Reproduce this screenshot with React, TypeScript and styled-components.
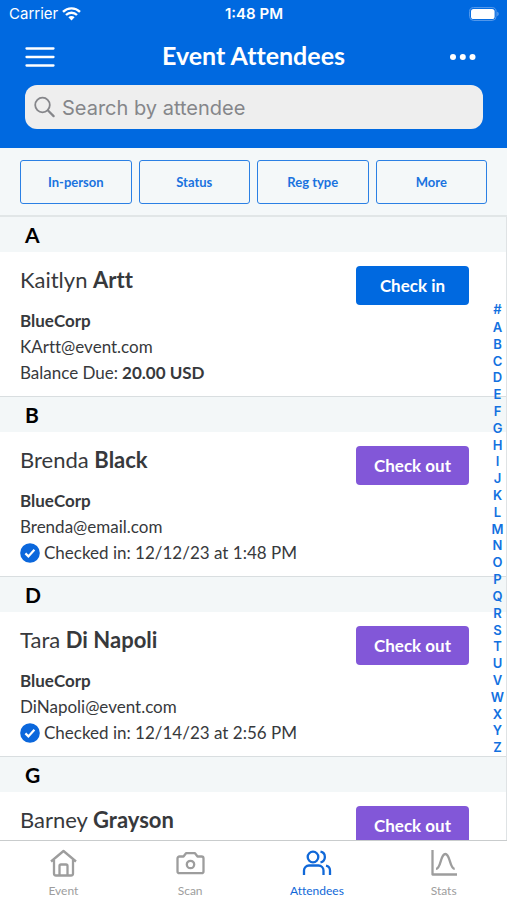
import React from "react";
import styled, { createGlobalStyle } from "styled-components";

const blue = "#0069e0";
const purple = "#8257d8";
const ink = "#37393c";
const lato = `Lato, "Liberation Sans", sans-serif`;
const system = `Inter, "Liberation Sans", sans-serif`;

const GlobalStyle = createGlobalStyle`
  *, *::before, *::after { box-sizing: border-box; }
  body {
    margin: 0;
    font-family: ${lato};
    font-variant-ligatures: none;
    color: ${ink};
    background: #fff;
  }
  button, input { font-family: inherit; font-variant-ligatures: inherit; margin: 0; }
  button { cursor: pointer; }
`;

const Screen = styled.div`
  display: flex;
  flex-direction: column;
  height: 100vh;
  overflow: hidden;
`;

const Header = styled.header`
  background: ${blue};
  color: #fff;
  padding-bottom: 19px;
`;

const StatusBar = styled.div`
  display: grid;
  grid-template-columns: 1fr auto 1fr;
  align-items: center;
  height: 28px;
  padding: 0 8px 0 9px;
  font: 400 15px/20px ${system};
`;

const Carrier = styled.span`
  display: flex;
  align-items: center;
  gap: 4px;
`;

const Clock = styled.time`
  font-weight: 600;
`;

const Battery = styled.svg`
  justify-self: end;
`;

const TitleBar = styled.div`
  display: grid;
  grid-template-columns: 1fr auto 1fr;
  align-items: center;
  height: 57px;
  padding: 0 25px;
`;

const Title = styled.h1`
  margin: 0;
  padding-bottom: 4px;
  font-size: 25px;
  line-height: 32px;
  font-weight: 700;
`;

const IconButton = styled.button<{ $end?: boolean }>`
  display: flex;
  justify-self: ${(p) => (p.$end ? "end" : "start")};
  padding: 0;
  border: 0;
  background: none;
  color: inherit;
`;

const SearchField = styled.label`
  display: flex;
  align-items: center;
  gap: 7px;
  height: 44px;
  margin: 0 24px 0 25px;
  padding: 0 9px;
  border-radius: 12px;
  background: #eeeeee;
  color: #85868a;
`;

const SearchInput = styled.input`
  flex: 1;
  min-width: 0;
  padding: 2px 0 0;
  border: 0;
  outline: 0;
  background: none;
  color: ${ink};
  font: 400 20px/28px ${system};
  &::placeholder { color: #85868a; opacity: 1; }
`;

const Filters = styled.div`
  display: grid;
  grid-template-columns: repeat(4, 1fr);
  gap: 7px;
  padding: 12px 20px 11px;
  border-bottom: 2px solid #e1e6e7;
  background: #f4f8f9;
`;

const FilterButton = styled.button`
  height: 44px;
  padding: 0;
  border: 1px solid #2b80e4;
  border-radius: 3px;
  background: transparent;
  color: #1a73df;
  font-size: 13px;
  font-weight: 700;
`;

const ListPane = styled.main`
  position: relative;
  flex: 1;
  min-height: 0;
  border-right: 1px solid #dfe3e5;
`;

const Scroller = styled.div`
  height: 100%;
  overflow-y: auto;
  scrollbar-width: none;
`;

const Group = styled.section`
  & + & { border-top: 1px solid #d9dee0; }
`;

const Letter = styled.h2`
  margin: 0;
  padding: 0 25px;
  background: #f3f7f8;
  color: #000;
  font-size: 21px;
  line-height: 35px;
  font-weight: 700;
`;

const Attendee = styled.article`
  display: flex;
  justify-content: space-between;
  align-items: flex-start;
  min-height: 144px;
  padding: 14px 37px 10px 20px;
`;

const Name = styled.h3`
  margin: 0 0 14px;
  font-size: 22px;
  line-height: 28px;
  font-weight: 400;
`;

const Line = styled.p`
  display: flex;
  align-items: center;
  gap: 4px;
  margin: 0;
  font-size: 17px;
  line-height: 26px;
  white-space: nowrap;
`;

const Action = styled.button<{ $out?: boolean }>`
  flex: none;
  width: 113px;
  height: 39px;
  padding: 0;
  border: 0;
  border-radius: 4px;
  background: ${(p) => (p.$out ? purple : blue)};
  color: #fff;
  font-size: 17px;
  font-weight: 700;
`;

const IndexRail = styled.nav`
  position: absolute;
  inset: 0 0 0 auto;
  width: 17px;
  padding-bottom: 3px;
  display: flex;
  flex-direction: column;
  justify-content: center;
`;

const IndexLetters = styled.div`
  display: flex;
  flex-direction: column;
  height: 437px;
`;

const IndexLink = styled.a`
  display: flex;
  flex: 1 1 0;
  align-items: center;
  justify-content: center;
  min-height: 0;
  color: #1271df;
  font: 600 13px/16px ${system};
  text-decoration: none;
`;

const IndexHash = styled(IndexLink)`
  flex: none;
  height: 20px;
`;

const TabBar = styled.nav`
  display: grid;
  grid-template-columns: repeat(4, 1fr);
  border-top: 1px solid #c9cccd;
  background: #fff;
`;

const Tab = styled.button<{ $active?: boolean }>`
  display: flex;
  flex-direction: column;
  align-items: center;
  gap: 5px;
  padding: 7px 0 1px;
  border: 0;
  background: none;
  color: ${(p) => (p.$active ? "#1068d8" : "#9d9d9d")};
  font-size: 12px;
  line-height: 16px;
`;

const TabIcon = styled.svg`
  width: 32px;
  height: 30px;
  fill: none;
  stroke: currentColor;
  stroke-width: 2.3;
  stroke-linejoin: round;
`;

const WifiIcon = () => (
  <svg width="19" height="14" viewBox="0 0 19 14" fill="none" stroke="#fff" strokeWidth="2.4" aria-hidden="true">
    <path d="M1 4.8a12.2 12.2 0 0 1 17 0M4 8a8 8 0 0 1 11 0" />
    <path d="M9.500 13.400 6.400 10.300a4.400 4.400 0 0 1 6.200 0Z" fill="#fff" stroke="none" />
  </svg>
);

const CheckIcon = () => (
  <svg width="20" height="20" viewBox="0 0 20 20" role="img" aria-label="Checked in">
    <circle cx="10" cy="10" r="9.800" fill="#0b67dc" />
    <path d="m5.400 10.400 3 3 6-6.600" fill="none" stroke="#fff" strokeWidth="2.200" />
  </svg>
);

type Person = {
  letter: string;
  first: string;
  last: string;
  email?: string;
  checkedIn?: string;
  balance?: string;
};

const people: Person[] = [
  { letter: "A", first: "Kaitlyn", last: "Artt", email: "KArtt@event.com", balance: "20.00 USD" },
  { letter: "B", first: "Brenda", last: "Black", email: "Brenda@email.com", checkedIn: "12/12/23 at 1:48 PM" },
  { letter: "D", first: "Tara", last: "Di Napoli", email: "DiNapoli@event.com", checkedIn: "12/14/23 at 2:56 PM" },
  { letter: "G", first: "Barney", last: "Grayson" },
];

const AttendeeRow = ({ person }: { person: Person }) => (
  <Group id={`group-${person.letter}`}>
    <Letter>{person.letter}</Letter>
    <Attendee>
      <div>
        <Name>
          {person.first} <b>{person.last}</b>
        </Name>
        {person.email && (
          <>
            <Line>
              <b>BlueCorp</b>
            </Line>
            <Line>{person.email}</Line>
          </>
        )}
        {person.balance && (
          <Line>
            Balance Due: <b>{person.balance}</b>
          </Line>
        )}
        {person.checkedIn && (
          <Line>
            <CheckIcon />
            Checked in: {person.checkedIn}
          </Line>
        )}
      </div>
      <Action type="button" $out={!person.balance}>
        {person.balance ? "Check in" : "Check out"}
      </Action>
    </Attendee>
  </Group>
);

export default function App() {
  return (
    <Screen>
      <GlobalStyle />
      <Header>
        <StatusBar>
          <Carrier>
            Carrier <WifiIcon />
          </Carrier>
          <Clock>1:48 PM</Clock>
          <Battery width="30" height="14" viewBox="0 0 30 14" aria-hidden="true">
            <rect x="0.600" y="0.600" width="26.500" height="12.800" rx="4" fill="none" stroke="#5b9dec" />
            <rect x="2" y="2" width="23.600" height="10" rx="2.600" fill="#fff" />
            <path d="M28.200 4.800c2 .6 2 3.800 0 4.400Z" fill="#5b9dec" />
          </Battery>
        </StatusBar>
        <TitleBar>
          <IconButton type="button" aria-label="Menu">
            <svg width="30" height="22" viewBox="0 0 30 22" stroke="currentColor" strokeWidth="2.300" strokeLinecap="round">
              <path d="M1.500 2.500h27M1.500 11h27M1.500 19.500h27" />
            </svg>
          </IconButton>
          <Title>Event Attendees</Title>
          <IconButton type="button" $end aria-label="More options">
            <svg width="32" height="8" viewBox="0 0 32 8" fill="currentColor">
              <circle cx="3" cy="4" r="3" />
              <circle cx="12.800" cy="4" r="3" />
              <circle cx="22.500" cy="4" r="3" />
            </svg>
          </IconButton>
        </TitleBar>
        <SearchField>
          <svg width="21" height="22" viewBox="0 0 21 22" fill="none" stroke="currentColor" strokeWidth="1.800" strokeLinecap="round" aria-hidden="true">
            <circle cx="8.500" cy="9" r="7.300" />
            <path d="m14 14.500 5.600 5.600" strokeWidth="2.200" />
          </svg>
          <SearchInput type="text" aria-label="Search by attendee" placeholder="Search by attendee" />
        </SearchField>
      </Header>
      <Filters>
        {["In-person", "Status", "Reg type", "More"].map((name) => (
          <FilterButton type="button" key={name}>
            {name}
          </FilterButton>
        ))}
      </Filters>
      <ListPane>
        <Scroller>
          {people.map((person) => (
            <AttendeeRow key={person.letter} person={person} />
          ))}
        </Scroller>
        <IndexRail aria-label="Jump to letter">
          <IndexHash href="#group-other">#</IndexHash>
          <IndexLetters>
            {"ABCDEFGHIJKLMNOPQRSTUVWXYZ".split("").map((letter) => (
              <IndexLink key={letter} href={`#group-${letter}`}>
                {letter}
              </IndexLink>
            ))}
          </IndexLetters>
        </IndexRail>
      </ListPane>
      <TabBar>
        <Tab type="button">
          <TabIcon viewBox="0 0 32 30" aria-hidden="true">
            <path d="M4 13.500 16.500 3 29 13.500M7 12v13.500a2 2 0 0 0 2 2h15a2 2 0 0 0 2-2V12" />
            <path d="M12.500 27.500V18a1.500 1.500 0 0 1 1.500-1.500h5a1.500 1.500 0 0 1 1.500 1.500v9.500" />
          </TabIcon>
          Event
        </Tab>
        <Tab type="button">
          <TabIcon viewBox="0 0 32 30" aria-hidden="true">
            <path d="M5.500 8.500h4l2.500-3.300h9l2.500 3.300h4a2 2 0 0 1 2 2v12.700a2 2 0 0 1-2 2h-22a2 2 0 0 1-2-2V10.500a2 2 0 0 1 2-2Z" />
            <circle cx="16.500" cy="16.500" r="3.700" />
          </TabIcon>
          Scan
        </Tab>
        <Tab type="button" $active aria-current="page">
          <TabIcon viewBox="0 0 32 30" aria-hidden="true">
            <circle cx="12" cy="9" r="5.300" />
            <path d="M19.500 3.700a5.400 5.400 0 0 1 0 10.600M3 27v-4.500a5 5 0 0 1 5-5h9.500a5 5 0 0 1 5 5v4.500M25 17.700a5 5 0 0 1 4 4.800v4.500" />
          </TabIcon>
          Attendees
        </Tab>
        <Tab type="button">
          <TabIcon viewBox="0 0 32 30" aria-hidden="true">
            <path d="M4.500 2v24.500H29" />
            <path d="M8 20.800c5.200 0 4.200-14.800 9.300-14.800s4.200 14.800 9.400 14.800" />
          </TabIcon>
          Stats
        </Tab>
      </TabBar>
    </Screen>
  );
}
